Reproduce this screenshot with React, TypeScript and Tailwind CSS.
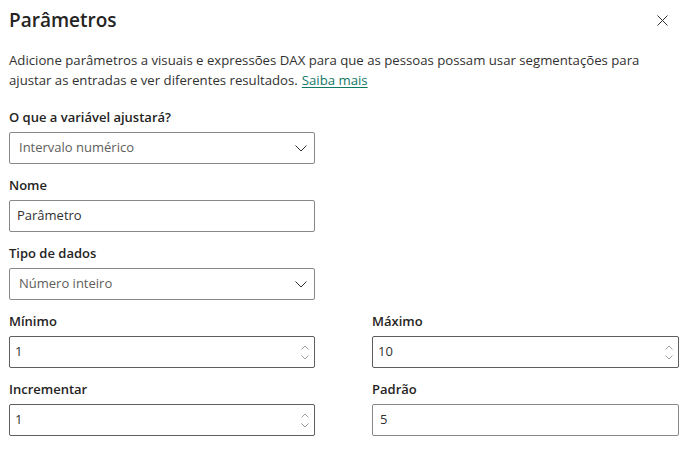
import React from "react";

const Chevron = () => (
  <svg width="12" height="7" viewBox="0 0 12 7" fill="none" className="shrink-0">
    <path d="M0.5 0.5 L6 6 L11.5 0.5" stroke="#323130" strokeWidth="1" />
  </svg>
);

const Spinner = () => (
  <div className="flex flex-col items-center gap-[5px] shrink-0">
    <svg width="8" height="5" viewBox="0 0 8 5" fill="none">
      <path d="M0.5 4.5 L4 1 L7.5 4.5" stroke="#a19f9d" strokeWidth="1" />
    </svg>
    <svg width="8" height="5" viewBox="0 0 8 5" fill="none">
      <path d="M0.5 0.5 L4 4 L7.5 0.5" stroke="#a19f9d" strokeWidth="1" />
    </svg>
  </div>
);

function Field({ label, children }: { label: string; children: React.ReactNode }) {
  return (
    <div className="flex flex-col mb-[11px]">
      <div className="h-[20px] leading-[20px] text-[13px] font-semibold text-[#252423]">{label}</div>
      <div className="mt-[5px]">{children}</div>
    </div>
  );
}

function Select({ value }: { value: string }) {
  return (
    <div className="h-[32px] border border-[#8a8886] rounded-[2px] flex items-center pl-[9px] pr-[7px] justify-between">
      <span className="text-[13px] text-[#605e5c]">{value}</span>
      <Chevron />
    </div>
  );
}

function TextInput({ value }: { value: string }) {
  return (
    <div className="h-[32px] border border-[#8a8886] rounded-[2px] flex items-center pl-[7px]">
      <span className="text-[13px] text-[#323130]">{value}</span>
    </div>
  );
}

function NumberInput({ value }: { value: string }) {
  return (
    <div className="h-[32px] border border-[#605e5c] rounded-[2px] flex items-center pl-[5px] pr-[5px] justify-between">
      <span className="text-[13px] text-[#323130]">{value}</span>
      <Spinner />
    </div>
  );
}

export default function App() {
  return (
    <div className="w-[686px] h-[451px] bg-white px-[9px] font-['Open_Sans',sans-serif] text-[#323130] overflow-hidden">
      <div className="h-[40px] flex items-center justify-between">
        <h1 className="text-[19px] font-semibold text-[#252423]">Parâmetros</h1>
        <svg width="11" height="11" viewBox="0 0 11 11" className="mr-[9px]" fill="none">
          <path d="M0.5 0.5 L10.5 10.5 M10.5 0.5 L0.5 10.5" stroke="#323130" strokeWidth="1" />
        </svg>
      </div>
      <div className="mt-[10px] text-[13.2px] leading-[20px] w-[665px]">
        <div>Adicione parâmetros a visuais e expressões DAX para que as pessoas possam usar segmentações para</div>
        <div className="flex gap-[4px]">
          <span>ajustar as entradas e ver diferentes resultados.</span>
          <span className="text-[#117865] underline underline-offset-2">Saiba mais</span>
        </div>
      </div>
      <div className="mt-[17px] grid grid-cols-[306px_307px] gap-x-[57px]">
        <div className="col-span-2 w-[306px]">
          <Field label="O que a variável ajustará?">
            <Select value="Intervalo numérico" />
          </Field>
          <Field label="Nome">
            <TextInput value="Parâmetro" />
          </Field>
          <Field label="Tipo de dados">
            <Select value="Número inteiro" />
          </Field>
        </div>
        <Field label="Mínimo">
          <NumberInput value="1" />
        </Field>
        <Field label="Máximo">
          <NumberInput value="10" />
        </Field>
        <Field label="Incrementar">
          <NumberInput value="1" />
        </Field>
        <Field label="Padrão">
          <TextInput value="5" />
        </Field>
      </div>
    </div>
  );
}
